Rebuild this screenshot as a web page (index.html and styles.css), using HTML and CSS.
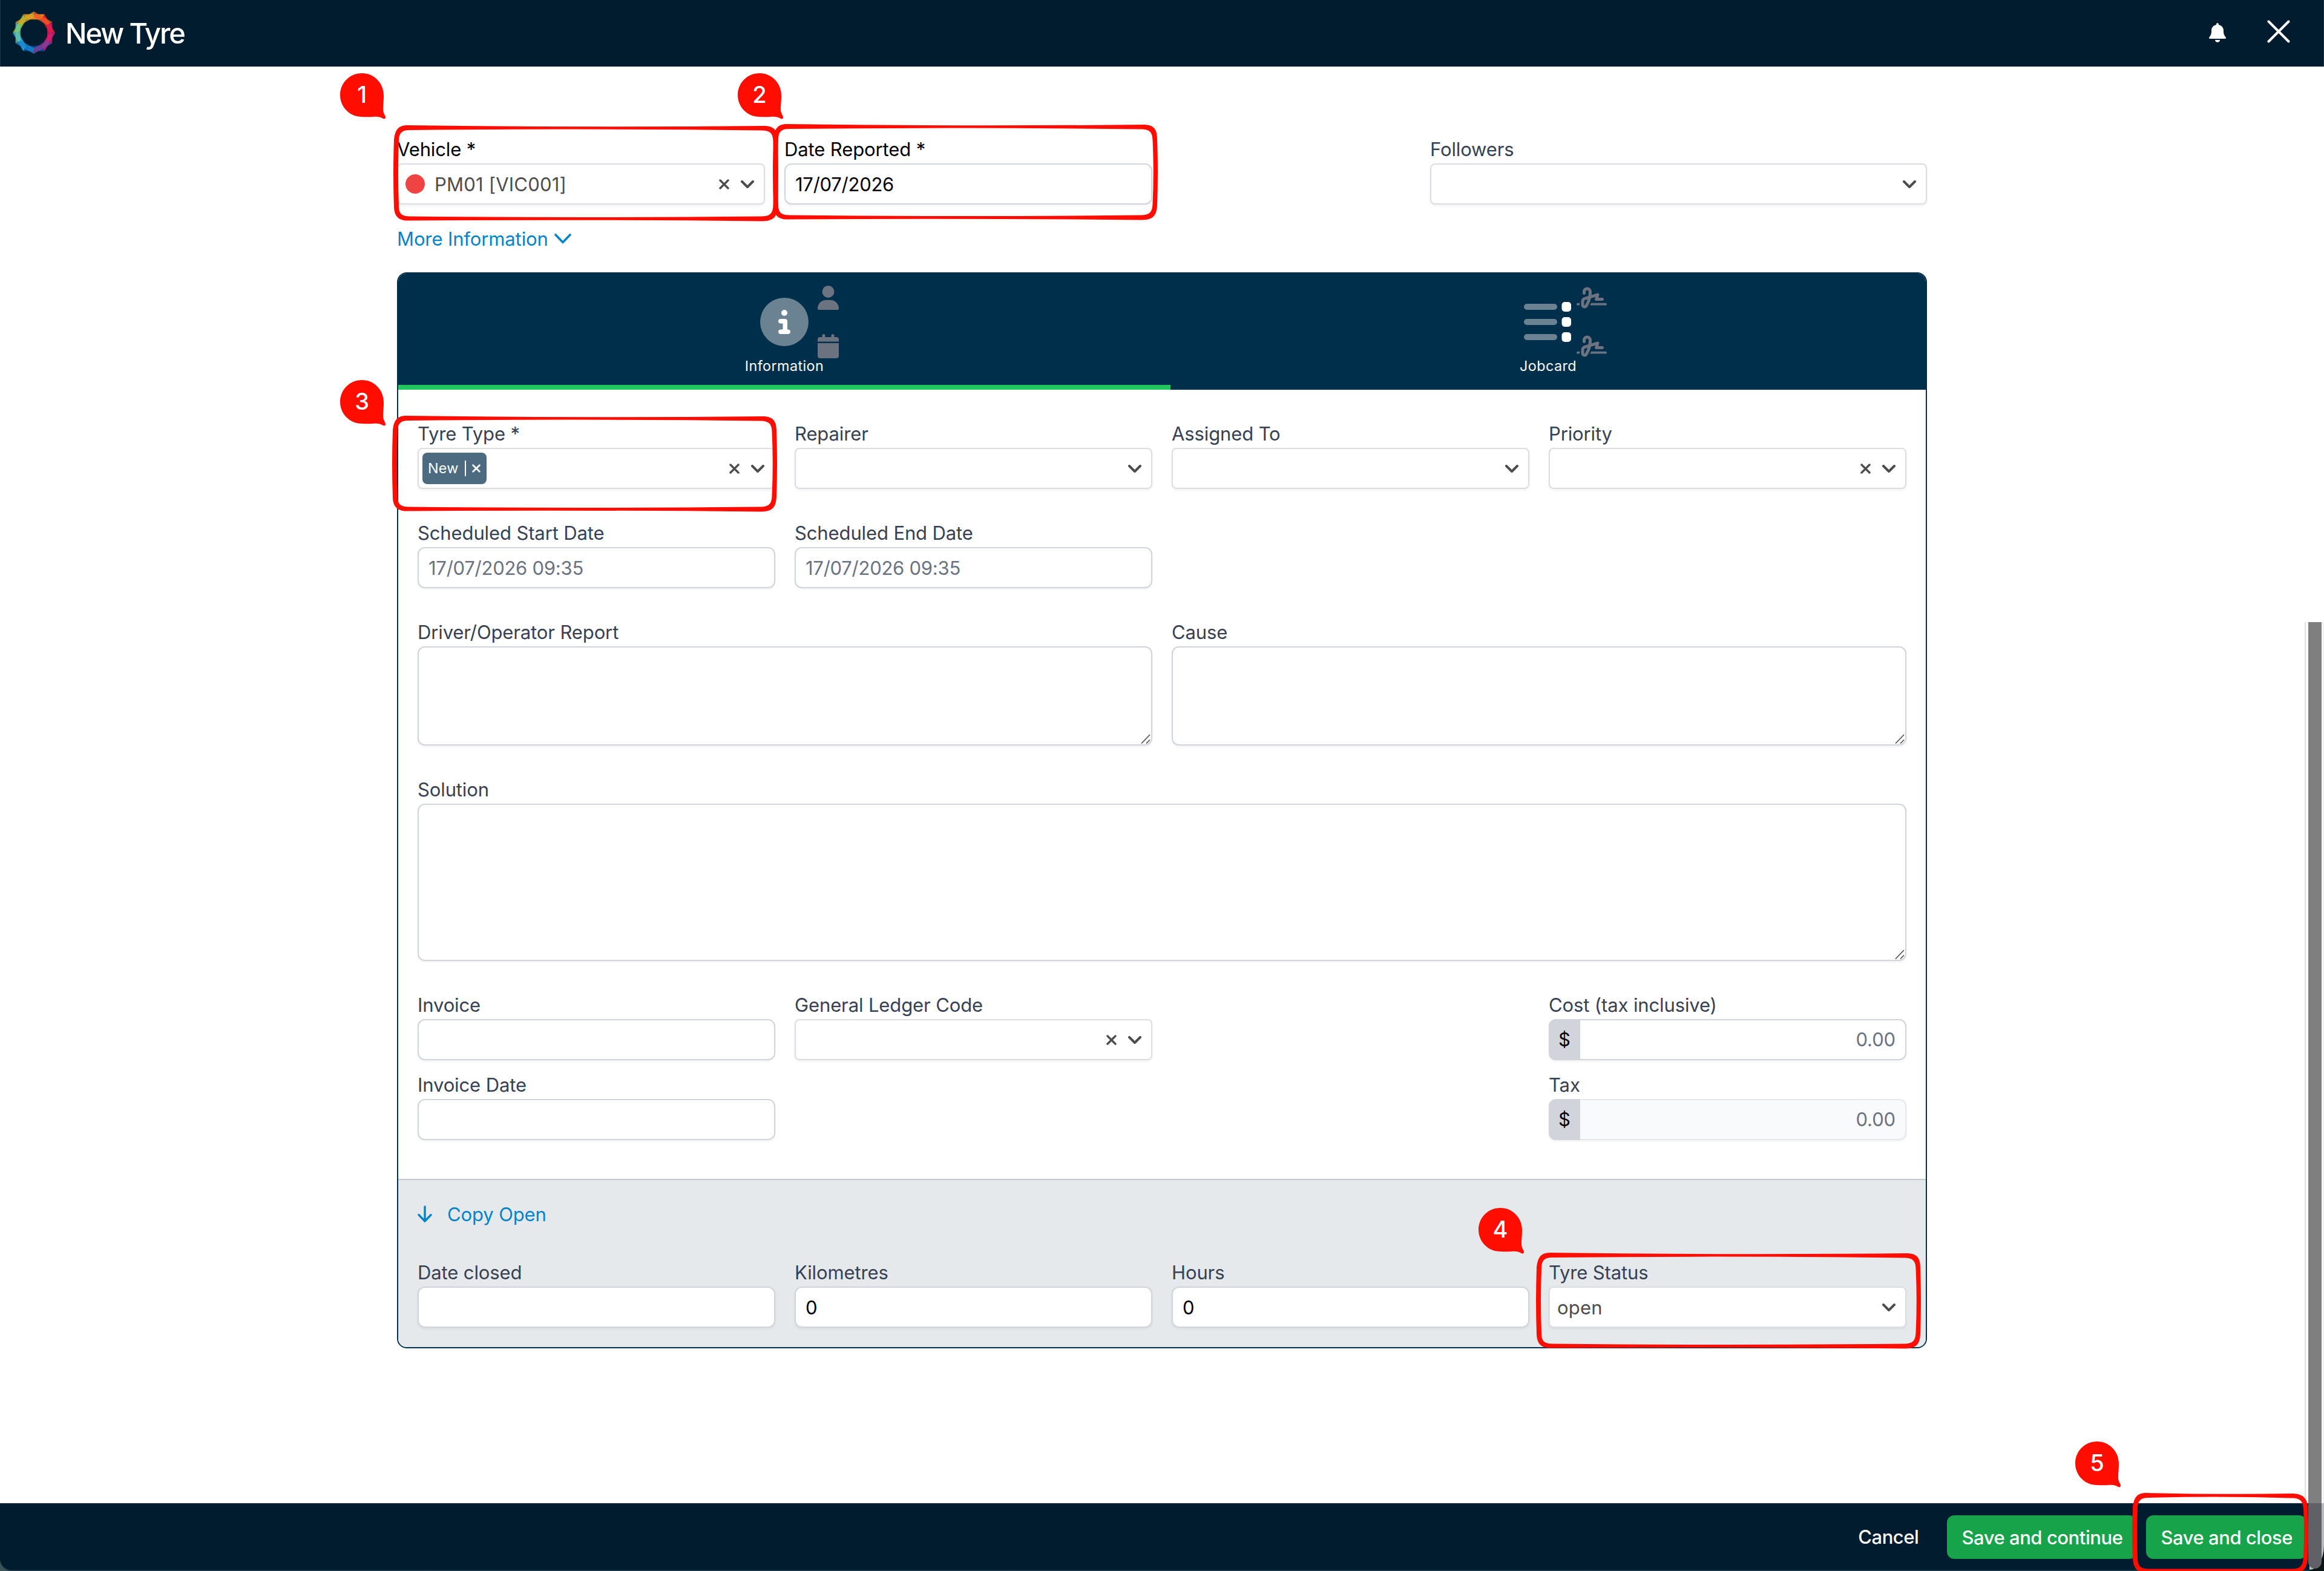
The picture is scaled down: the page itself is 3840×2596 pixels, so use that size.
FILE: index.html
```html
<!DOCTYPE html>
<html lang="en">
<head>
<meta charset="utf-8">
<title>New Tyre</title>
<link rel="stylesheet" href="styles.css">
</head>
<body>
<svg class="defs" width="0" height="0" aria-hidden="true">
  <symbol id="chevron" viewBox="0 0 22 13"><path d="M2 2l9 9 9-9" fill="none" stroke="currentColor" stroke-width="4" stroke-linecap="round" stroke-linejoin="round"/></symbol>
  <symbol id="cross" viewBox="0 0 17 17"><path d="M2 2l13 13M15 2L2 15" fill="none" stroke="currentColor" stroke-width="3.400" stroke-linecap="round"/></symbol>
  <symbol id="grip" viewBox="0 0 16 16"><path d="M1 15.500L15 1M9 15.500L15 9.500" fill="none" stroke="#4b4b4b" stroke-width="1.600"/></symbol>
  <symbol id="signature" viewBox="0 0 640 512"><path fill="currentColor" d="M192 128c0-17.7 14.3-32 32-32s32 14.3 32 32v7.8c0 27.700-2.400 55.300-7.100 82.500l-84.400 25.300c-40.600 12.200-68.400 49.600-68.400 92v71.900c0 40 32.500 72.500 72.500 72.500c26 0 50-13.900 62.900-36.500l13.900-24.300c26.800-47 46.500-97.700 58.400-150.500l94.400-28.300-12.500 37.500c-3.300 9.800-1.600 20.500 4.400 28.800s15.700 13.300 26 13.300H544c17.700 0 32-14.300 32-32s-14.300-32-32-32H460.400l18-53.900c3.800-11.300 .9-23.800-7.400-32.400s-20.700-11.800-32.200-8.400L316.400 198.100c2.400-20.700 3.600-41.400 3.600-62.300V128c0-53-43-96-96-96s-96 43-96 96v32c0 17.700 14.300 32 32 32s32-14.300 32-32V128zm-9.200 177l49-14.700c-10.400 33.800-24.500 66.400-42.100 97.200l-13.900 24.300c-1.500 2.600-4.300 4.300-7.400 4.300c-4.700 0-8.500-3.800-8.500-8.500V335.600c0-14.100 9.300-26.600 22.800-30.700zM24 368c-13.300 0-24 10.700-24 24s10.700 24 24 24H64.300c-.2-2.800-.3-5.600-.3-8.500V368H24zm592 48c13.300 0 24-10.700 24-24s-10.700-24-24-24H305.900c-6.700 16.300-14.200 32.300-22.300 48H616z"/></symbol>
  <symbol id="bubble" viewBox="0 0 76 76"><path fill="#ff0d00" d="M36 0C56 0 72 16 72 37C72 46 71 52 71 60C71 66 75 70 75 73C75 75.500 73 76 71 75C66 72 62 71.500 54 72C47 72.600 41 72 36 72C16 72 0 56 0 36C0 16 16 0 36 0Z"/></symbol>
  <symbol id="frame" viewBox="0 0 636 159"><path fill="#ff0d00" fill-rule="evenodd" d="M24 0Q318 4 612 1C630 1 635 9 635 25Q637 80 635 134C634 150 630 158 610 158.500Q318 155.500 24 157.500C8 157.500 2 150 1 136Q-1 80 1 24C3 7 8 0 24 0ZM26 8C14 8 9 13 9 26Q7 80 9 132C9 146 13 150 26 150.500Q318 153.500 608 150.500C622 150.500 627 146 627.500 132Q630 80 627.500 26C627 13 622 8.500 608 8.500Q318 5 26 8Z"/></symbol>
  <symbol id="frame-small" viewBox="0 0 291 133"><path fill="#ff0d00" fill-rule="evenodd" d="M24 0Q145 3 266 1C284 2 290 10 290 26Q292 66 290 108C289 124 284 132 266 133H24C8 132 2 124 1 108Q-1 66 1 24C3 7 8 0 24 0ZM26 8C14 8 9 13 9 26Q7 66 9 106C9 120 13 125 26 125.500H266C278 125 282 120 283 106Q285 66 283 26C282 14 278 8.500 264 8.500Q145 5 26 8Z"/></symbol>
</svg>

<header class="topbar">
  <svg class="logo" viewBox="-105 -105 210 210">
    <g opacity=".93">
      <path d="M-52.500-91H52.500L38-66H-38Z" fill="#f7941d"/>
      <path d="M-52.500-91H52.500L38-66H-38Z" fill="#0054a6" transform="rotate(180)"/>
      <path d="M-52.500-91H52.500L38-66H-38Z" fill="#ed1c24" transform="rotate(60)"/>
      <path d="M-52.500-91H52.500L38-66H-38Z" fill="#c61c8c" transform="rotate(120)"/>
      <path d="M-52.500-91H52.500L38-66H-38Z" fill="#29abe2" transform="rotate(240)"/>
      <path d="M-52.500-91H52.500L38-66H-38Z" fill="#8cc63f" transform="rotate(300)"/>
    </g>
    <g opacity=".78">
      <path d="M-52.500-91H52.500L38-66H-38Z" fill="#f15a29" transform="rotate(30)"/>
      <path d="M-52.500-91H52.500L38-66H-38Z" fill="#d91e5b" transform="rotate(90)"/>
      <path d="M-52.500-91H52.500L38-66H-38Z" fill="#7f3f98" transform="rotate(150)"/>
      <path d="M-52.500-91H52.500L38-66H-38Z" fill="#1c86cf" transform="rotate(210)"/>
      <path d="M-52.500-91H52.500L38-66H-38Z" fill="#6cc5a0" transform="rotate(270)"/>
      <path d="M-52.500-91H52.500L38-66H-38Z" fill="#d6a72c" transform="rotate(330)"/>
    </g>
  </svg>
  <h1 class="title">New Tyre</h1>
  <svg class="bell" viewBox="0 0 448 512"><path fill="#fff" d="M256 32V49.880C328.500 61.390 384 124.200 384 200V233.400C384 278.800 399.500 322.900 427.800 358.400L442.700 377C448.500 384.200 449.600 394.100 445.600 402.400C441.600 410.700 433.200 416 424 416H24C14.770 416 6.365 410.700 2.369 402.400C-1.628 394.100-.504 384.200 5.260 377L20.170 358.400C48.540 322.900 64 278.800 64 233.400V200C64 124.200 119.500 61.390 192 49.880V32C192 14.330 206.300 0 224 0C241.700 0 256 14.330 256 32zM288 448C288 464.100 281.300 481.300 269.300 493.300C257.300 505.300 240.100 512 224 512C207 512 190.700 505.300 178.700 493.300C166.700 481.300 160 464.100 160 448H288z"/></svg>
  <svg class="close" viewBox="0 0 38 38"><path d="M2.500 2.500l33 33M35.500 2.500l-33 33" stroke="#fff" stroke-width="4" stroke-linecap="round"/></svg>
</header>

<main class="page">
  <div class="form">
    <div class="grid top-fields">
      <div class="field">
        <div class="label strong">Vehicle *</div>
        <div class="select"><span class="dot"></span><span class="chosen">PM01 [VIC001]</span><svg class="cross"><use href="#cross"/></svg><svg class="chevron"><use href="#chevron"/></svg></div>
      </div>
      <div class="field">
        <div class="label strong">Date Reported *</div>
        <div class="input digits value">17/07/2026</div>
      </div>
      <div class="field followers">
        <div class="label">Followers</div>
        <div class="select"><svg class="chevron"><use href="#chevron"/></svg></div>
      </div>
    </div>

    <a class="more"><span>More Information</span><svg class="more-chevron" viewBox="0 0 28 17"><path d="M2 2l12 12.500L26 2" fill="none" stroke="currentColor" stroke-width="3.600" stroke-linecap="round" stroke-linejoin="round"/></svg></a>

    <section class="card">
      <nav class="tabs">
        <div class="tab active">
          <div class="tab-icon">
            <svg width="80" height="80" viewBox="0 0 512 512"><circle cx="256" cy="256" r="256" fill="#6b8292"/><path fill="#fff" d="M216 336h24V272H216c-13.300 0-24-10.700-24-24s10.700-24 24-24h48c13.300 0 24 10.700 24 24v88h8c13.300 0 24 10.700 24 24s-10.700 24-24 24H216c-13.300 0-24-10.700-24-24s10.700-24 24-24zM256 128a32 32 0 1 1 0 64 32 32 0 1 1 0-64z"/></svg>
            <div class="tab-hints">
              <svg width="35" height="40" viewBox="0 0 448 512"><path fill="currentColor" d="M224 256A128 128 0 1 0 224 0a128 128 0 1 0 0 256zm-45.700 48C79.800 304 0 383.800 0 482.300C0 498.700 13.300 512 29.700 512H418.300c16.400 0 29.700-13.300 29.700-29.700C448 383.800 368.200 304 269.700 304H178.300z"/></svg>
              <svg width="35" height="40" viewBox="0 0 448 512"><path fill="currentColor" d="M96 32V64H48C21.500 64 0 85.500 0 112v48H448V112c0-26.500-21.500-48-48-48H352V32c0-17.700-14.300-32-32-32s-32 14.300-32 32V64H160V32c0-17.700-14.300-32-32-32S96 14.300 96 32zM448 192H0V464c0 26.500 21.500 48 48 48H400c26.500 0 48-21.500 48-48V192z"/></svg>
            </div>
          </div>
          <span class="tab-name">Information</span>
        </div>
        <div class="tab">
          <div class="tab-icon">
            <svg width="80" height="80" viewBox="0 0 80 80"><g fill="#6b8292"><rect x="0" y="10" width="55" height="10" rx="5"/><rect x="0" y="35" width="55" height="10" rx="5"/><rect x="0" y="60" width="55" height="10" rx="5"/></g><g fill="#fff"><rect x="62.500" y="7" width="15.500" height="16" rx="5"/><rect x="62.500" y="32" width="15.500" height="16" rx="5"/><rect x="62.500" y="57" width="15.500" height="16" rx="5"/></g></svg>
            <div class="tab-hints signatures">
              <svg width="50" height="40"><use href="#signature"/></svg>
              <svg width="50" height="40"><use href="#signature"/></svg>
            </div>
          </div>
          <span class="tab-name">Jobcard</span>
        </div>
      </nav>

      <div class="body">
        <div class="grid">
          <div class="field">
            <div class="label">Tyre Type *</div>
            <div class="select tagged"><span class="tag"><span>New</span><i class="tag-rule"></i><svg class="tag-cross"><use href="#cross"/></svg></span><svg class="cross"><use href="#cross"/></svg><svg class="chevron"><use href="#chevron"/></svg></div>
          </div>
          <div class="field"><div class="label">Repairer</div><div class="select"><svg class="chevron"><use href="#chevron"/></svg></div></div>
          <div class="field"><div class="label">Assigned To</div><div class="select"><svg class="chevron"><use href="#chevron"/></svg></div></div>
          <div class="field"><div class="label">Priority</div><div class="select"><svg class="cross"><use href="#cross"/></svg><svg class="chevron"><use href="#chevron"/></svg></div></div>
        </div>
        <div class="grid">
          <div class="field"><div class="label">Scheduled Start Date</div><div class="input digits">17/07/2026 09:35</div></div>
          <div class="field"><div class="label">Scheduled End Date</div><div class="input digits">17/07/2026 09:35</div></div>
        </div>
        <div class="grid">
          <div class="field half"><div class="label">Driver/Operator Report</div><div class="input area"><svg class="grip"><use href="#grip"/></svg></div></div>
          <div class="field half"><div class="label">Cause</div><div class="input area"><svg class="grip"><use href="#grip"/></svg></div></div>
        </div>
        <div class="field"><div class="label">Solution</div><div class="input area tall"><svg class="grip"><use href="#grip"/></svg></div></div>
        <div class="grid invoice">
          <div class="field"><div class="label">Invoice</div><div class="input"></div></div>
          <div class="field"><div class="label">General Ledger Code</div><div class="select"><svg class="cross"><use href="#cross"/></svg><svg class="chevron"><use href="#chevron"/></svg></div></div>
          <div class="field last"><div class="label">Cost (tax inclusive)</div><div class="input money"><span class="unit">$</span><span>0.00</span></div></div>
          <div class="field"><div class="label">Invoice Date</div><div class="input"></div></div>
          <div class="field last"><div class="label">Tax</div><div class="input money disabled"><span class="unit">$</span><span>0.00</span></div></div>
        </div>
      </div>

      <div class="closing">
        <a class="copy"><svg width="24" height="28" viewBox="0 0 24 28"><path d="M12 2v23M2 15.500L12 26l10-10.500" fill="none" stroke="currentColor" stroke-width="3.400" stroke-linecap="round" stroke-linejoin="round"/></svg><span>Copy Open</span></a>
        <div class="grid">
          <div class="field"><div class="label">Date closed</div><div class="input"></div></div>
          <div class="field"><div class="label">Kilometres</div><div class="input value">0</div></div>
          <div class="field"><div class="label">Hours</div><div class="input value">0</div></div>
          <div class="field"><div class="label">Tyre Status</div><div class="select"><span class="chosen">open</span><svg class="chevron"><use href="#chevron"/></svg></div></div>
        </div>
      </div>
    </section>
  </div>
</main>

<footer class="actions">
  <span class="cancel">Cancel</span>
  <span class="button">Save and continue</span>
  <span class="button">Save and close</span>
</footer>

<div class="track"></div>
<div class="corner"><i></i></div>
<div class="thumb"></div>

<svg class="frame f1"><use href="#frame"/></svg>
<svg class="frame f2"><use href="#frame"/></svg>
<svg class="frame f3"><use href="#frame"/></svg>
<svg class="frame f4"><use href="#frame"/></svg>
<svg class="frame f5"><use href="#frame-small"/></svg>
<div class="step s1"><svg><use href="#bubble"/></svg><b>1</b></div>
<div class="step s2"><svg><use href="#bubble"/></svg><b>2</b></div>
<div class="step s3"><svg><use href="#bubble"/></svg><b>3</b></div>
<div class="step s4"><svg><use href="#bubble"/></svg><b>4</b></div>
<div class="step s5"><svg><use href="#bubble"/></svg><b>5</b></div>
</body>
</html>
```
FILE: styles.css
```css
* { box-sizing: border-box; }
body {
  margin: 0;
  width: 3840px;
  height: 2596px;
  overflow: hidden;
  position: relative;
  display: flex;
  flex-direction: column;
  background: #fff;
  color: #374151;
  font-family: Inter, "Liberation Sans", sans-serif;
  font-size: 31px;
  line-height: 40px;
  letter-spacing: -.12px;
}
svg { display: block; flex: none; }
.defs { position: absolute; }

.topbar {
  height: 110px;
  flex: none;
  display: flex;
  align-items: center;
  padding: 0 55px 0 20px;
  border: solid #1c3543;
  border-width: 0 1px;
  background: #001c2e;
}
.logo { width: 70px; height: 70px; margin-top: -2px; }
.title {
  margin: 0 auto 0 17px;
  color: #fff;
  font-size: 47px;
  font-weight: 500;
  line-height: 60px;
  letter-spacing: -2.1px;
}
.bell { width: 28px; height: 32px; margin-right: 68px; margin-top: -2px; }
.close { width: 38px; height: 38px; margin-top: -7px; }

.page { flex: 1; }
.form { width: 2528px; margin: 0 auto; padding-top: 116px; }
.grid { display: grid; grid-template-columns: repeat(4, 1fr); column-gap: 32px; }
.field { min-width: 0; }
.half { grid-column: span 2; }
.last { grid-column: 4; }
.followers { grid-column: 3 / 5; width: 821px; justify-self: end; }
.label { height: 40px; padding-top: 1px; margin-bottom: 4px; white-space: nowrap; }
.strong { color: #000; }

.input, .select {
  height: 68px;
  display: flex;
  align-items: center;
  padding: 1px 16px 0;
  border: 2px solid #d1d5db;
  border-radius: 12px;
  background: #fff;
  box-shadow: 0 2px 4px rgba(0, 0, 0, .06);
  color: #6b7280;
  white-space: nowrap;
}
.select {
  justify-content: flex-end;
  padding-top: 0;
  border-color: #dcdde2;
  border-radius: 8px;
  color: #4d4d4d;
}
.value { color: #000; }
.digits { letter-spacing: -.25px; }
.chosen { margin-right: auto; margin-left: -4px; padding-top: 1px; letter-spacing: .2px; }
.dot { width: 32px; height: 32px; border-radius: 50%; background: #ef4444; margin: 0 20px 0 -4px; }
.cross { width: 17px; height: 17px; margin-right: 19px; }
.chevron { width: 22px; height: 13px; }
.tagged { padding-left: 6px; }
.tag {
  display: flex;
  align-items: center;
  width: 106px;
  height: 52px;
  margin-right: auto;
  padding-left: 9px;
  border-radius: 8px;
  background: #4d6b80;
  color: #fff;
  font-size: 23.3px;
  letter-spacing: .3px;
}
.tag-rule { width: 2px; height: 26px; margin: 0 10px; background: #fff; }
.tag-cross { width: 14px; height: 14px; }
.area { position: relative; height: 164px; }
.tall { height: 260px; }
.grip { position: absolute; right: 1px; bottom: 1px; width: 16px; height: 16px; }
.money { justify-content: space-between; padding: 0 16px 0 0; overflow: hidden; }
.unit {
  align-self: stretch;
  width: 52px;
  display: flex;
  align-items: center;
  justify-content: center;
  margin: -2px 0 -2px -2px;
  background: #d1d5db;
  border-radius: 12px 0 0 12px;
  color: #000;
}
.money { overflow: visible; }
.disabled { background: #f9fafb; border-color: #e5e7eb; }

.more { display: flex; align-items: center; height: 40px; margin: 36px 0; color: #0284c7; }
.more span { padding-top: 1px; }
.more-chevron { width: 28px; height: 17px; margin-left: 10px; }

.card { border: 2px solid #002f4b; border-radius: 16px; overflow: hidden; }
.tabs { display: grid; grid-template-columns: 1276px 1fr; height: 192px; background: #002f4b; }
.tab {
  display: flex;
  flex-direction: column;
  align-items: center;
  padding-top: 40px;
  border-bottom: 8px solid transparent;
  color: #fff;
}
.active { border-color: #22c55e; }
.tab-icon { position: relative; width: 80px; height: 80px; }
.tab-hints {
  position: absolute;
  left: 95px;
  top: -20px;
  display: flex;
  flex-direction: column;
  gap: 40px;
  color: #6b7280;
}
.signatures { left: 87px; }
.tab-name { margin-top: 13px; font-size: 23.3px; letter-spacing: .45px; }

.body { display: flex; flex-direction: column; gap: 52px; padding: 52px 32px 64px; }
.invoice { row-gap: 20px; }
.closing { padding: 36px 32px 32px; border-top: 2px solid #c1cad2; background: #e5e9ec; }
.copy { display: flex; align-items: center; gap: 25px; height: 40px; margin-bottom: 56px; color: #0284c7; }
.copy span { padding-top: 1px; }

.actions {
  height: 112px;
  flex: none;
  display: flex;
  align-items: center;
  justify-content: flex-end;
  padding: 2px 29px 0 0;
  border-bottom: 2px solid #1b3344;
  border-bottom-left-radius: 20px;
  background: #001c2e;
  color: #fff;
  font-weight: 500;
  letter-spacing: -.45px;
  white-space: nowrap;
  box-shadow: -20px 20px 0 #3c5457;
}
.cancel { margin-right: 47px; }
.button {
  height: 72px;
  line-height: 73px;
  padding: 0 23px 0 24px;
  border-radius: 12px;
  background: #16a34a;
}
.button + .button { margin-left: 16px; }

/* window scrollbar and the rounded corner under it */
.track {
  position: absolute;
  left: 3808px;
  top: 1028px;
  width: 32px;
  height: 1456px;
  border: solid #e0e0e0;
  border-width: 0 2px;
  border-right-color: #ededed;
  background: #fafafa;
}
.corner { position: absolute; left: 3816px; top: 2484px; width: 24px; height: 112px; background: #0b1414; }
.corner i { display: block; height: 110px; background: #b5babd; border-bottom-right-radius: 24px 40px; }
.thumb {
  position: absolute;
  left: 3814px;
  top: 1028px;
  width: 22px;
  height: 1564px;
  border-radius: 0 0 11px 11px;
  background: linear-gradient(#7f7f7f 1456px, #5f6166 1456px);
}

.frame { position: absolute; width: 636px; height: 159px; }
.f1 { left: 650px; top: 207px; }
.f2 { left: 1277px; top: 205px; }
.f3 { left: 648px; top: 687px; }
.f4 { left: 2538px; top: 2070px; }
.f5 { left: 3523px; top: 2467px; width: 291px; height: 133px; }
.step { position: absolute; width: 76px; height: 76px; }
.step svg { width: 76px; height: 76px; }
.step b {
  position: absolute;
  left: 0;
  top: 0;
  width: 72px;
  line-height: 71px;
  text-align: center;
  color: #fff;
  font-size: 38px;
  font-weight: 500;
}
.s1 { left: 562px; top: 121px; }
.s2 { left: 1219px; top: 121px; }
.s3 { left: 562px; top: 628px; }
.s4 { left: 2443px; top: 1996px; }
.s5 { left: 3429px; top: 2382px; }
```
